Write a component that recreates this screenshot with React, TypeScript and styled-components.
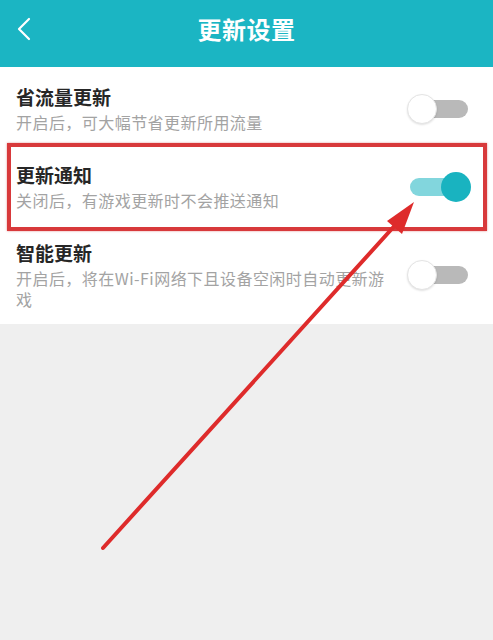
import React from "react";
import styled, { createGlobalStyle } from "styled-components";

const Global = createGlobalStyle`
  html, body { margin: 0; padding: 0; background: #efefef; }
  body { font-family: "Noto Sans CJK SC", "Noto Sans", sans-serif; }
  #root { min-height: 640px; }
`;

const Page = styled.div`
  position: relative;
  width: 493px;
  min-height: 640px;
  background: #efefef;
  overflow: hidden;
`;

const Header = styled.header`
  height: 67px;
  background: #1bb5c3;
  display: grid;
  grid-template-columns: 60px 1fr 60px;
  align-items: center;
`;

const Back = styled.div`
  display: flex;
  align-items: center;
  padding-left: 16px;
  margin-top: -10px;
`;

const Title = styled.h1`
  margin: -10px 0 0;
  text-align: center;
  color: #fff;
  font-size: 24px;
  font-weight: 700;
  letter-spacing: 0.5px;
`;

const List = styled.section`
  background: #fff;
  display: flex;
  flex-direction: column;
`;

const Row = styled.div<{ $highlight?: boolean; $last?: boolean }>`
  position: relative;
  display: flex;
  align-items: center;
  padding: 17px 0 ${(p) => (p.$last ? "14px" : "12px")} 16px;
  ${(p) =>
    p.$highlight &&
    `
    &::after {
      content: "";
      position: absolute;
      left: 7px;
      right: 6px;
      top: -2px;
      bottom: -8px;
      border: 4px solid #d8393b;
      box-shadow: 0 0 2px rgba(200, 40, 40, 0.5);
      pointer-events: none;
    }
  `}
`;

const Texts = styled.div`
  flex: 0 0 374px;
  display: flex;
  flex-direction: column;
`;

const RowTitle = styled.div`
  font-size: 19px;
  line-height: 26px;
  font-weight: 700;
  color: #262626;
`;

const RowSub = styled.div`
  margin-top: 2px;
  font-size: 16px;
  line-height: 21px;
  letter-spacing: 0.45px;
  color: #a3a3a3;
`;

const Switch = styled.div<{ $on?: boolean }>`
  position: relative;
  margin-left: 17px;
  width: 64px;
  height: 30px;
  display: flex;
  align-items: center;
  &::before {
    content: "";
    position: absolute;
    left: 3px;
    right: 3px;
    top: 6px;
    height: 18px;
    border-radius: 9px;
    background: ${(p) => (p.$on ? "#82d6dd" : "#b9b9b9")};
  }
`;

const Knob = styled.span<{ $on?: boolean }>`
  position: absolute;
  top: 0;
  left: ${(p) => (p.$on ? "34px" : "0")};
  width: 30px;
  height: 30px;
  border-radius: 50%;
  box-sizing: border-box;
  background: ${(p) => (p.$on ? "#19b3c0" : "#fff")};
  border: ${(p) => (p.$on ? "none" : "1px solid #e4e4e4")};
  box-shadow: ${(p) => (p.$on ? "none" : "0 1px 2px rgba(0,0,0,0.12)")};
`;

const Arrow = styled.svg`
  position: absolute;
  left: 0;
  top: 0;
  pointer-events: none;
`;

const rows = [
  { title: "省流量更新", sub: "开启后，可大幅节省更新所用流量", on: false },
  { title: "更新通知", sub: "关闭后，有游戏更新时不会推送通知", on: true, highlight: true },
  { title: "智能更新", sub: "开启后，将在Wi-Fi网络下且设备空闲时自动更新游戏", on: false },
];

export default function App() {
  return (
    <Page>
      <Global />
      <Header>
        <Back>
          <svg width="16" height="24" viewBox="0 0 16 24">
            <path d="M13 2 L3 12 L13 22" fill="none" stroke="#fff" strokeWidth="2.2" strokeLinecap="round" strokeLinejoin="round" />
          </svg>
        </Back>
        <Title>更新设置</Title>
        <div />
      </Header>
      <List>
        {rows.map((r, i) => (
          <Row key={r.title} $highlight={r.highlight} $last={i === rows.length - 1}>
            <Texts>
              <RowTitle>{r.title}</RowTitle>
              <RowSub>{r.sub}</RowSub>
            </Texts>
            <Switch $on={r.on}>
              <Knob $on={r.on} />
            </Switch>
          </Row>
        ))}
      </List>
      <Arrow width="493" height="640" viewBox="0 0 493 640">
        <line x1="103" y1="548" x2="398" y2="222" stroke="#de2b2b" strokeWidth="4" strokeLinecap="round" />
        <polygon points="414,202 387,221 402,234" fill="#de2b2b" />
      </Arrow>
    </Page>
  );
}
